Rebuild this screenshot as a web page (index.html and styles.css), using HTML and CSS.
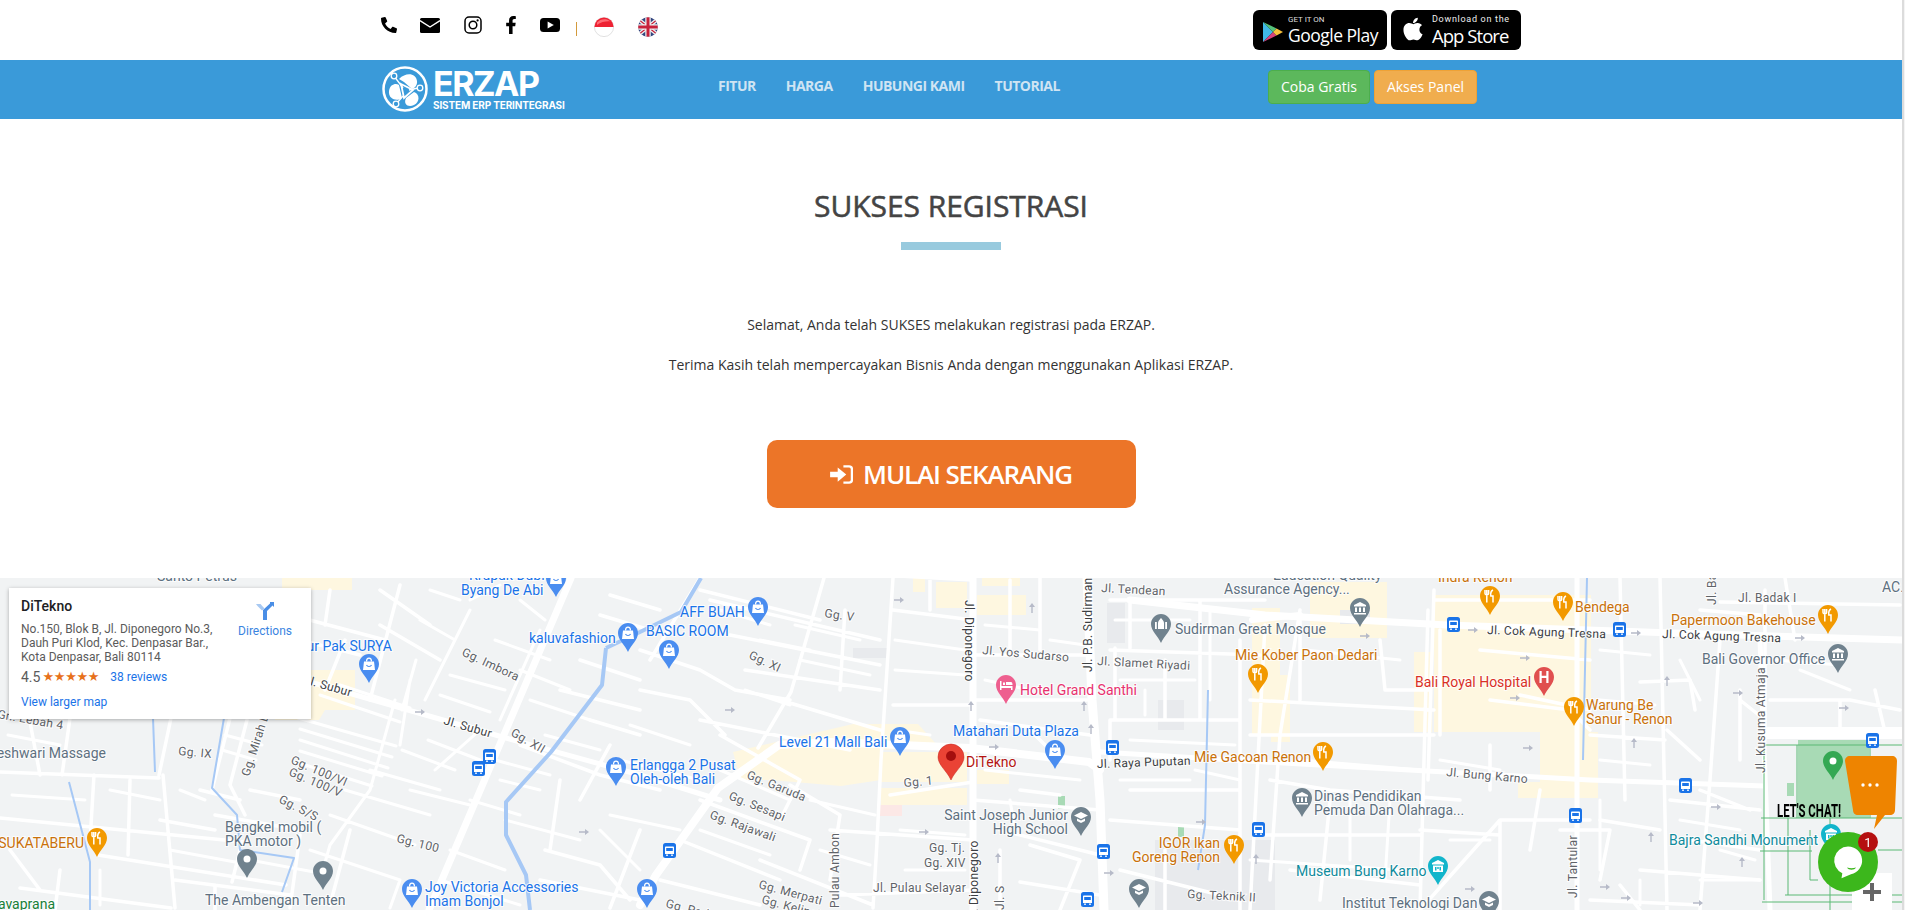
FILE: index.html
```html
<!DOCTYPE html>
<html lang="id">
<head>
<meta charset="utf-8">
<title>Sukses Registrasi - ERZAP</title>
<link rel="stylesheet" href="styles.css">
</head>
<body>
<div class="page">
  <header class="topbar">
    <div class="container topbar-row">
      <div class="social">
        <a class="ico ico-phone"><svg viewBox="0 0 512 512"><path transform="matrix(-1 0 0 1 512 0)" d="M493.4 24.6l-104-24c-11.3-2.6-22.9 3.3-27.5 13.9l-48 112c-4.2 9.8-1.4 21.3 6.9 28l60.6 49.6c-36 76.7-98.9 140.5-177.2 177.2l-49.6-60.6c-6.8-8.3-18.2-11.1-28-6.9l-112 48C3.9 366.5-2 378.1.6 389.4l24 104C27.1 504.2 36.7 512 48 512c256.1 0 464-207.5 464-464 0-11.2-7.7-20.9-18.6-23.4z"/></svg></a>
        <a class="ico ico-mail"><svg viewBox="0 0 20 15"><rect width="20" height="15" rx="1.5"/><path class="ln-white" d="M0 2.6L10 9l10-6.4"/></svg></a>
        <a class="ico ico-insta"><svg viewBox="0 0 18 18"><rect class="ln-black" x="1" y="1" width="16" height="16" rx="4"/><circle class="ln-black" cx="9" cy="9" r="3.8"/><circle cx="13.6" cy="4.4" r="1.1"/></svg></a>
        <a class="ico ico-fb"><svg viewBox="0 0 320 512"><path d="M279.14 288l14.22-92.66h-88.91v-60.13c0-25.35 12.42-50.06 52.24-50.06h40.42V6.26S260.43 0 225.36 0c-73.22 0-121.08 44.38-121.08 124.72v70.62H22.89V288h81.39v224h100.17V288z"/></svg></a>
        <a class="ico ico-yt"><svg viewBox="0 0 20 14"><rect width="20" height="14" rx="3.5"/><path class="fill-white" d="M7.6 3.6l6.2 3.4-6.2 3.4z"/></svg></a>
        <span class="sep"></span>
        <a class="flag"><svg viewBox="0 0 20 20"><circle cx="10" cy="10" r="9.6" class="flag-white"/><path class="flag-red" d="M.4 10a9.6 9.6 0 0 1 19.2 0z"/><path class="flag-shine" d="M3 5.6C6 2 12 1 16.600 4.400 12 4 7 5 3 8z"/></svg></a>
        <a class="flag"><svg viewBox="0 0 20 20"><defs><clipPath id="ukc"><circle cx="10" cy="10" r="9.800"/></clipPath></defs><g clip-path="url(#ukc)"><rect width="20" height="20" class="uk-blue"/><path class="uk-w4" d="M0 2L20 18M20 2L0 18"/><path class="uk-r1" d="M0 2L20 18M20 2L0 18"/><path class="uk-w6" d="M10 0V20M0 10H20"/><path class="uk-r3" d="M10 0V20M0 10H20"/></g></svg></a>
      </div>
      <div class="stores">
        <a class="store store-play">
          <svg class="play-ico" viewBox="0 0 20 20"><path class="pl-a" d="M0 0v20l10-10z"/><path class="pl-b" d="M0 0l10 10 3.500-3.500z"/><path class="pl-c" d="M0 20l10-10 3.500 3.500z"/><path class="pl-d" d="M13.500 6.500L10 10l3.500 3.500L20 10z"/></svg>
          <span class="store-txt"><small>GET IT ON</small><b>Google Play</b></span>
        </a>
        <a class="store store-apple">
          <svg class="apple-ico" viewBox="0 0 384 512"><path d="M318.700 268.700c-.2-36.700 16.400-64.400 50-84.800-18.800-26.900-47.200-41.700-84.700-44.600-35.500-2.800-74.300 20.700-88.500 20.700-15 0-49.400-19.700-76.400-19.700C63.300 141.200 4 184.800 4 273.500q0 39.300 14.400 81.200c12.800 36.700 59 126.700 107.200 125.200 25.200-.6 43-17.900 75.800-17.900 31.800 0 48.300 17.900 76.400 17.900 48.600-.7 90.400-82.500 102.600-119.300-65.200-30.700-61.700-90-61.700-91.900zm-56.600-164.200c27.300-32.400 24.800-61.900 24-72.500-24.100 1.400-52 16.400-67.900 34.900-17.500 19.800-27.800 44.300-25.600 71.900 26.100 2 49.900-11.400 69.500-34.300z"/></svg>
          <span class="store-txt"><small class="small-dl">Download on the</small><b class="b-app">App Store</b></span>
        </a>
      </div>
    </div>
  </header>

  <nav class="navbar">
    <div class="container nav-row">
      <a class="brand">
        <svg class="brand-mark" viewBox="0 0 46 46">
          <circle class="ring" cx="23" cy="23" r="21.500"/>
          <path class="fill-white" d="M17 13C24 6 34 7 35 15c.5 4-2 7-5 8l-8-7z"/>
          <path class="fill-white" d="M7 25c1-7 7-8 10-6l3 13c-5 4-14 1-13-7z"/>
          <path class="fill-white" d="M24 32l8-6c6 2 6 10 0 13-6 3-11-1-8-7z"/>
          <path class="brand-tri" d="M19 18l12 6-9 8z"/>
          <path class="brand-lines" d="M21 22L12 10M27 24l9-2M21 30l-6 7"/>
          <circle class="brand-node" cx="12" cy="10" r="2.800"/>
          <circle class="brand-node" cx="38" cy="22" r="2.800"/>
          <circle class="brand-node" cx="14" cy="38" r="2.800"/>
        </svg>
        <span class="brand-txt"><b>ERZAP</b><small>SISTEM ERP TERINTEGRASI</small></span>
      </a>
      <ul class="menu">
        <li>FITUR</li>
        <li>HARGA</li>
        <li>HUBUNGI KAMI</li>
        <li>TUTORIAL</li>
      </ul>
      <div class="nav-btns">
        <a class="btn btn-green">Coba Gratis</a>
        <a class="btn btn-amber">Akses Panel</a>
      </div>
    </div>
  </nav>

  <main class="content">
    <h1 class="title">SUKSES REGISTRASI</h1>
    <div class="title-bar"></div>
    <p class="lead">Selamat, Anda telah SUKSES melakukan registrasi pada ERZAP.</p>
    <p class="lead lead-2">Terima Kasih telah mempercayakan Bisnis Anda dengan menggunakan Aplikasi ERZAP.</p>
    <a class="cta">
      <svg class="cta-ico" viewBox="0 0 24 20"><path d="M0 7h8V2.500L17 10l-9 7.500V13H0z"/><path class="cta-door" d="M14 1.500h6c1.700 0 3 1.300 3 3v11c0 1.700-1.300 3-3 3h-6"/></svg>
      <span>MULAI SEKARANG</span>
    </a>
  </main>

  <section class="map">
    <svg class="map-svg" viewBox="0 578 1902 332" xmlns="http://www.w3.org/2000/svg">
      <defs>
        <path id="tear" d="M10 0C4.500 0 0 4.500 0 10c0 7 7 12 10 19 3-7 10-12 10-19C20 4.500 15.500 0 10 0z"/>
        <symbol id="p-bag" viewBox="0 0 20 29" width="20" height="29"><use href="#tear" class="c-blue"/><path class="fill-white" d="M5 7.500h10l1 8.500H4z"/><path class="bag-h" d="M7.500 7.500C7.500 3 12.500 3 12.500 7.500"/><path class="bag-s" d="M7.500 11c1 2 4 2 5 0"/></symbol>
        <symbol id="p-food" viewBox="0 0 20 29" width="20" height="29"><use href="#tear" class="c-orange"/><path class="food" d="M6.800 4v5M5 4v3.500c0 1.700 3.600 1.700 3.600 0V4M6.800 9v7.500M13 4c-2 1-2.500 4-2.200 6H13v6.500"/></symbol>
        <symbol id="p-dot" viewBox="0 0 20 29" width="20" height="29"><use href="#tear" class="c-gray"/><circle class="fill-white" cx="10" cy="10" r="3.500"/></symbol>
        <symbol id="p-bank" viewBox="0 0 20 29" width="20" height="29"><use href="#tear" class="c-gray"/><path class="fill-white" d="M10 4l6 3v1.500H4V7zM5 9.500h2V14H5zM9 9.500h2V14H9zM13 9.500h2V14h-2zM4 15h12v1.500H4z"/></symbol>
        <symbol id="p-school" viewBox="0 0 20 29" width="20" height="29"><use href="#tear" class="c-gray"/><path class="fill-white" d="M10 5l7 3.500-7 3.500-7-3.500zM6 11.500l4 2 4-2V14l-4 2-4-2z"/></symbol>
        <symbol id="p-mosque" viewBox="0 0 20 29" width="20" height="29"><use href="#tear" class="c-gray"/><path class="fill-white" d="M10 4c1 1.500 3 2.500 3 5v6H7V9c0-2.500 2-3.500 3-5zM4 8h1.800v7H4zM14.200 8H16v7h-1.800z"/></symbol>
        <symbol id="p-hotel" viewBox="0 0 20 29" width="20" height="29"><use href="#tear" class="c-pink"/><path class="fill-white" d="M4 6h1.500v5h11v4H15v-2H5.500v2H4zM7 7.500h2v2.500H7zM10 7h5c1 0 1.500 1 1.500 3H10z"/></symbol>
        <symbol id="p-teal" viewBox="0 0 20 29" width="20" height="29"><use href="#tear" class="c-teal"/><path class="fill-white" d="M10 4l6 3v1.500H4V7zM5 9.500h10V16H5z"/><path class="c-teal" d="M7 11h1.500v3.500H7zM11.500 11H13v3.500h-1.500zM9.300 11h1.400v2H9.300z"/></symbol>
        <symbol id="p-green" viewBox="0 0 20 29" width="20" height="29"><use href="#tear" class="c-green"/><circle class="fill-white" cx="10" cy="10" r="3.500"/></symbol>
        <symbol id="p-h" viewBox="0 0 20 29" width="20" height="29"><use href="#tear" class="c-red"/><path class="fill-white" d="M5.500 4h2.200v4.800h4.600V4h2.200v12h-2.200v-5h-4.600v5H5.500z"/></symbol>
        <symbol id="bus" viewBox="0 0 13 15" width="13" height="15"><rect width="13" height="15" rx="2.500" class="c-bus"/><path class="fill-white" d="M3 3.500h7c.5 0 1 .4 1 1V11H2V4.500c0-.6.500-1 1-1zM3.200 11.500h1.600V13H3.200zM8.200 11.500h1.600V13H8.200z"/><path class="c-bus" d="M3.200 5h6.600v3H3.200z"/></symbol>
        <symbol id="ah" viewBox="0 0 10 6" width="10" height="6"><path class="c-arrow" d="M0 2.300h6V0l4 3-4 3V3.700H0z"/></symbol>
        <symbol id="av" viewBox="0 0 6 10" width="6" height="10"><path class="c-arrow" d="M2.300 10V4H0l3-4 3 4H3.700v6z"/></symbol>
      </defs>

      <rect x="0" y="578" width="1902" height="332" class="m-bg"/>

      <g class="m-yellow">
        <path d="M275 670h80v40h-30l-6 10h-44zM282 578h70v12h-70z"/>
        <path d="M733 752l120-28h65l20 22-57 4v30l-40 6-70-6-30 0z"/>
        <path d="M881 752h86v30h-86zM881 788h86v17h-86zM977 770h32v14h-32z"/>
        <path d="M936 582h31v26h-31zM977 595h49v20h-49zM913 578h12v14h-12zM982 578h38v8h-38z"/>
        <path d="M1252 608h28v127h-28z"/>
        <path d="M1310 582h77v56h-77zM1271 675h19v67h-19zM1414 652h18v80h-18z"/>
        <path d="M1434 595h157v137h-157zM1518 782h80v16h-80zM1540 732h58v50h-58z"/>
      </g>
      <rect x="878" y="805" width="24" height="11" class="m-pink"/>
      <rect x="1058" y="796" width="7" height="13" class="m-park"/>
      <rect x="1178" y="825" width="6" height="12" class="m-park"/>
      <rect x="1158" y="700" width="26" height="30" class="m-block"/>
      <rect x="1340" y="610" width="30" height="14" class="m-block"/>
      <rect x="1107" y="603" width="18" height="40" class="m-block"/>
      <rect x="1155" y="840" width="120" height="70" class="m-dark"/>
      <rect x="853" y="648" width="34" height="10" class="m-block"/>

      <path class="r3" d="M0 772L159 778M0 818L245 842M98 855L286 885M20 888L171 908M163 775L175 908M171 718L159 775M94 775L90 842M30 722L40 775M70 718L62 775M10 850L40 890M55 910L60 870M230 718L212 790M247 720L230 785L245 815M250 790L300 800M215 815L300 830M200 790L240 800M130 780L128 855M240 850L232 882M300 835L290 908M350 830L330 905M160 820L215 830M175 880L290 895M215 885L215 910"/>
      <path class="r2" d="M298 718L396 746M300 729L392 757M300 740L388 768M300 751L382 776M296 762L372 786M320 695L400 722M340 685L410 708M395 700L370 790L330 845L320 880M410 680L400 745M370 770L440 790M345 790L430 815M330 815L415 845M310 850L400 880M400 880L390 908M416 660L402 710M430 590L460 600M420 620L455 640L470 610M455 640L425 700M450 675L505 690M470 600L500 585M520 600L545 620M495 640L550 660M520 670L570 690M540 630L500 720M435 770L480 730M428 740L480 760M500 780L540 790M505 820L580 840M450 850L505 870M470 800L520 815M440 880L520 905"/>
      <path class="r2" d="M225 735L262 745M222 750L256 760M8 735L60 745M110 790L160 800M12 795L85 800M180 790L205 800M170 850L235 862M100 870L100 905M250 860L330 875M410 790L470 805M402 750L455 770M440 695L490 712M495 760L550 775M530 700L590 720M545 735L600 750M630 725L690 745M620 760L700 780M610 815L680 830M600 830L640 870M720 610L770 625M760 640L810 650M745 690L790 705M795 625L860 640M800 660L870 675M720 770L790 800M700 830L770 855M810 800L875 815M820 850L870 865M895 640L965 650M895 670L965 675M895 730L930 735M900 830L965 835M905 870L965 870M985 625L1040 630M985 680L1030 690M985 770L1080 780M1010 800L1015 830M1050 640L1085 645M1115 620H1190M1120 680H1195M1130 740L1235 745M1120 780H1190M1145 690V715M1210 610L1210 700M1195 770L1240 780M1250 860L1400 870M1305 650L1400 660M1300 760L1420 770M1350 800V860M1390 800L1385 880M1440 760L1500 770M1450 840H1490M1600 650L1650 655M1600 700L1655 705M1600 760L1650 765M1600 800V870M1680 660L1700 700M1680 820L1740 830M1720 850L1755 860M1640 880L1640 905M1700 880H1760M1775 660L1840 665M1800 670L1850 690"/>
      <path class="r3" d="M302 618L385 640M300 640L360 655M330 590L325 625M400 585L370 700M345 640L325 690M380 590L430 625M380 625L440 660M560 690L640 710M580 660L640 680M600 615L650 630M610 595L660 610M520 745L600 775L660 790M560 780L550 850M545 850L600 865M600 865L630 900M640 830L610 908M540 880L640 900M590 720L640 735M610 745L580 800"/>
      <path class="r3" d="M824 578L791 692L758 748M893 578L881 760L877 842L873 908M640 650L700 670L735 690L790 700M640 690L690 700L725 735M700 590L820 620M710 600L880 640M730 635L880 665M745 670L880 690M780 700L880 730M700 720L850 750M720 735L800 780L780 820M700 800L810 840L800 870M680 840L780 880M660 880L760 905M790 785L840 815L830 880M830 830L973 840M840 895L973 890M700 578L650 660M880 575L973 580M893 610L973 620M893 705L973 705M890 795L973 782M760 860L873 905M845 610L840 690M930 580V610M1040 578V650M1010 580V650M973 655H1087M973 700H1087M980 720L1090 735M973 800L1100 810M1000 830L1100 855M1000 850L1000 910M1030 845L1080 860L1060 910M1020 790L1060 795M1030 730L1060 760M1020 882L1100 895"/>
      <path class="r3" d="M1110 600H1265M1110 650L1260 655M1110 720H1240M1115 648V720M1200 600V720M1130 600V648M1165 660V720M1240 640V910M1110 820L1240 830M1130 790H1240V815M1110 760V720M1120 870L1240 900M1165 850V910M1265 625L1250 910M1250 700L1434 710M1300 610L1280 735L1270 880M1250 735L1434 735M1300 620V700M1380 640L1385 690H1430M1434 590L1428 780M1428 610L1420 910M1260 835H1420M1270 780L1330 790L1460 800M1330 800L1320 900M1290 870L1420 885M1420 830L1500 835M1420 910L1500 820H1590M1440 630V735M1490 700L1570 710L1590 730M1490 745V790M1540 790L1530 850M1500 820L1500 910M1577 578V910M1435 600L1590 600M1480 650L1590 660M1520 695L1590 710M1620 578L1625 800M1660 578L1667 910M1590 735L1665 740M1600 820L1660 830M1560 830H1610L1600 880M1590 900L1700 905M1620 885L1640 910M1640 682L1690 680L1695 710M1667 730L1700 760M1700 790L1750 810M1720 640L1710 780L1700 910M1720 602L1900 605M1740 690V760M1740 700L1765 720M1770 700L1850 700L1900 710M1785 578L1795 640M1840 700V732M1875 690L1885 732M1670 800L1760 810M1640 870L1760 880M1690 840L1760 850"/>
      <path class="r3" d="M1700 610L1760 615M1765 590L1765 740"/>

      <path class="r-w" d="M1252 620L1300 615"/>
      <path class="r7" d="M571 578L429 910"/>
      <path class="r5" d="M262 670L310 682L506 738L640 775L720 800"/>
      <path class="r8" d="M640 905L656 875L718 788L779 745L830 742L970 748L1089 762L1100 770"/>
      <path class="r5" d="M1100 752L1265 762L1590 780L1765 786"/>
      <path class="r9" d="M1087 578L1092 700L1100 800L1104 910"/>
      <path class="r7" d="M973 578V910"/>
      <path class="r7" d="M1130 600L1265 615L1447 625L1673 633L1905 640"/>
      <path class="r5" d="M1577 578V910"/>
      <path class="r5" d="M1760 640L1770 910"/>
      <path class="r12" d="M1765 733H1905"/>

      <path class="w5" d="M606 648L602 685L551 752L506 802L506 835L526 875L530 910M606 648L640 632L681 612L701 578"/>
      <path class="w2" d="M224 718L212 788L237 815L240 850L294 858L282 892M69 782L90 862L90 910M153 718L155 772M1587 578L1583 760M1208 690L1205 825L1198 870"/>

      <rect x="1798" y="740" width="71" height="78" class="m-parkb"/>
      <rect x="1787" y="783" width="7" height="13" class="m-parkb"/>
      <path class="g1" d="M1764 745V900M1764 745H1902M1761 818H1902M1797 745V818M1788 818V895M1760 851H1812M1785 895H1902M1762 902H1902M1870 745V818M1810 830V880H1818M1830 818V910M1878 850H1902"/>

      <g class="l14">
        <text x="157" y="581" class="t-gray">Santo Petrus</text>
        <text x="469" y="580" class="t-blue">Krupuk Dubi</text>
        <text x="461" y="595" class="t-blue">Byang De Abi</text>
        <text x="392" y="651" class="t-blue t-end">Sayur Pak SURYA</text>
        <text x="529" y="643" class="t-blue">kaluvafashion</text>
        <text x="630" y="770" class="t-blue">Erlangga 2 Pusat</text>
        <text x="630" y="784" class="t-blue">Oleh-oleh Bali</text>
        <text x="425" y="892" class="t-blue">Joy Victoria Accessories</text>
        <text x="425" y="906" class="t-blue">Imam Bonjol</text>
        <text x="680" y="617" class="t-blue">AFF BUAH</text>
        <text x="646" y="636" class="t-blue">BASIC ROOM</text>
        <text x="779" y="747" class="t-blue">Level 21 Mall Bali</text>
        <text x="953" y="736" class="t-blue">Matahari Duta Plaza</text>
        <text x="106" y="758" class="t-gray t-end">Rameshwari Massage</text>
        <text x="225" y="832" class="t-gray">Bengkel mobil (</text>
        <text x="225" y="846" class="t-gray">PKA motor )</text>
        <text x="205" y="905" class="t-gray">The Ambengan Tenten</text>
        <text x="84" y="848" class="t-orange t-end">SUKATABERU</text>
        <text x="55" y="909" class="t-green t-end">Navaprana</text>
        <text x="1020" y="695" class="t-pink">Hotel Grand Santhi</text>
        <text x="966" y="767" class="t-dred">DiTekno</text>
        <text x="1068" y="820" class="t-gray t-end">Saint Joseph Junior</text>
        <text x="1068" y="834" class="t-gray t-end">High School</text>
        <text x="1175" y="634" class="t-gray">Sudirman Great Mosque</text>
        <text x="1235" y="660" class="t-orange">Mie Kober Paon Dedari</text>
        <text x="1194" y="762" class="t-orange">Mie Gacoan Renon</text>
        <text x="1220" y="848" class="t-orange t-end">IGOR Ikan</text>
        <text x="1220" y="862" class="t-orange t-end">Goreng Renon</text>
        <text x="1273" y="580" class="t-gray">Education Quality</text>
        <text x="1224" y="594" class="t-gray">Assurance Agency...</text>
        <text x="1438" y="582" class="t-orange">Indra Renon</text>
        <text x="1575" y="612" class="t-orange">Bendega</text>
        <text x="1671" y="625" class="t-orange">Papermoon Bakehouse</text>
        <text x="1702" y="664" class="t-gray">Bali Governor Office</text>
        <text x="1415" y="687" class="t-red">Bali Royal Hospital</text>
        <text x="1586" y="710" class="t-orange">Warung Be</text>
        <text x="1586" y="724" class="t-orange">Sanur - Renon</text>
        <text x="1314" y="801" class="t-gray">Dinas Pendidikan</text>
        <text x="1314" y="815" class="t-gray">Pemuda Dan Olahraga...</text>
        <text x="1296" y="876" class="t-teal">Museum Bung Karno</text>
        <text x="1342" y="908" class="t-gray">Institut Teknologi Dan</text>
        <text x="1669" y="845" class="t-teal">Bajra Sandhi Monument</text>
        <text x="1882" y="592" class="t-gray">AC.</text>
      </g>
      <g class="l12">
        <text x="461" y="655" transform="rotate(25 461 655)">Gg. Imbora</text>
        <text x="303" y="683" transform="rotate(16 303 683)" class="t-dark">Jl. Subur</text>
        <text x="443" y="724" transform="rotate(16 443 724)" class="t-dark">Jl. Subur</text>
        <text x="510" y="735" transform="rotate(30 510 735)">Gg. XII</text>
        <text x="178" y="755" transform="rotate(5 178 755)">Gg. IX</text>
        <text x="249" y="777" transform="rotate(-72 249 777)">Gg. Mirah D</text>
        <text x="290" y="763" transform="rotate(23 290 763)">Gg. 100/VI</text>
        <text x="288" y="775" transform="rotate(23 288 775)">Gg. 100/V</text>
        <text x="278" y="802" transform="rotate(27 278 802)">Gg. S/S</text>
        <text x="396" y="842" transform="rotate(14 396 842)">Gg. 100</text>
        <text x="-3" y="718" transform="rotate(10 -3 718)">Gn. Lebah 4</text>
        <text x="824" y="617" transform="rotate(8 824 617)">Gg. V</text>
        <text x="748" y="658" transform="rotate(25 748 658)">Gg. XI</text>
        <text x="965" y="600" transform="rotate(90 965 600)" class="t-dark">Jl. Diponegoro</text>
        <text x="1092" y="672" transform="rotate(-90 1092 672)" class="t-dark">Jl. P.B. Sudirman</text>
        <text x="1101" y="592" transform="rotate(3 1101 592)">Jl. Tendean</text>
        <text x="982" y="654" transform="rotate(5 982 654)">Jl. Yos Sudarso</text>
        <text x="1097" y="665" transform="rotate(3 1097 665)">Jl. Slamet Riyadi</text>
        <text x="1097" y="768" transform="rotate(-2 1097 768)" class="t-dark">Jl. Raya Puputan</text>
        <text x="904" y="787" transform="rotate(-5 904 787)">Gg. 1</text>
        <text x="746" y="778" transform="rotate(22 746 778)">Gg. Garuda</text>
        <text x="728" y="799" transform="rotate(22 728 799)">Gg. Sesapi</text>
        <text x="709" y="818" transform="rotate(20 709 818)">Gg. Rajawali</text>
        <text x="929" y="852">Gg. Tj.</text>
        <text x="924" y="867">Gg. XIV</text>
        <text x="839" y="908" transform="rotate(-90 839 908)">Pulau Ambon</text>
        <text x="873" y="892">Jl. Pulau Selayar</text>
        <text x="758" y="888" transform="rotate(15 758 888)">Gg. Merpati</text>
        <text x="761" y="903" transform="rotate(15 761 903)">Gg. Kelinci</text>
        <text x="665" y="907" transform="rotate(15 665 907)">Gg. Padma</text>
        <text x="978" y="922" transform="rotate(-90 978 922)" class="t-dark">Jl. Diponegoro</text>
        <text x="1004" y="910" transform="rotate(-90 1004 910)">Jl. S</text>
        <text x="1187" y="898" transform="rotate(3 1187 898)">Gg. Teknik II</text>
        <text x="1487" y="634" transform="rotate(2 1487 634)" class="t-dark">Jl. Cok Agung Tresna</text>
        <text x="1662" y="638" transform="rotate(2 1662 638)" class="t-dark">Jl. Cok Agung Tresna</text>
        <text x="1446" y="776" transform="rotate(5 1446 776)">Jl. Bung Karno</text>
        <text x="1738" y="602">Jl. Badak I</text>
        <text x="1716" y="605" transform="rotate(-90 1716 605)">Jl. Badak</text>
        <text x="1765" y="773" transform="rotate(-90 1765 773)">Jl. Kusuma Atmaja</text>
        <text x="1577" y="898" transform="rotate(-90 1577 898)">Jl. Tantular</text>
      </g>

      <use href="#p-bag" x="546" y="568"/><use href="#p-bag" x="359" y="654"/><use href="#p-bag" x="618" y="623"/><use href="#p-bag" x="606" y="757"/>
      <use href="#p-bag" x="402" y="879"/><use href="#p-bag" x="748" y="597"/><use href="#p-bag" x="659" y="640"/><use href="#p-bag" x="890" y="727"/><use href="#p-bag" x="1045" y="740"/><use href="#p-bag" x="637" y="879"/>
      <use href="#p-food" x="87" y="828"/><use href="#p-food" x="1248" y="664"/><use href="#p-food" x="1224" y="835"/><use href="#p-food" x="1480" y="586"/><use href="#p-food" x="1553" y="592"/><use href="#p-food" x="1818" y="605"/><use href="#p-food" x="1564" y="697"/><use href="#p-food" x="1313" y="742"/>
      <use href="#p-dot" x="237" y="849"/><use href="#p-dot" x="313" y="861"/>
      <use href="#p-hotel" x="996" y="675"/>
      <use href="#p-mosque" x="1151" y="614"/>
      <use href="#p-school" x="1071" y="807"/><use href="#p-school" x="1129" y="879"/><use href="#p-school" x="1479" y="891"/>
      <use href="#p-bank" x="1350" y="598"/><use href="#p-bank" x="1828" y="644"/><use href="#p-bank" x="1292" y="788"/>
      <use href="#p-h" x="1534" y="667"/>
      <use href="#p-teal" x="1428" y="856"/><use href="#p-teal" x="1821" y="824"/>
      <use href="#p-green" x="1823" y="751"/>

      <use href="#bus" x="483" y="749"/><use href="#bus" x="472" y="761"/><use href="#bus" x="663" y="843"/><use href="#bus" x="1106" y="740"/><use href="#bus" x="1097" y="844"/><use href="#bus" x="1081" y="892"/><use href="#bus" x="1252" y="822"/><use href="#bus" x="1447" y="617"/><use href="#bus" x="1613" y="622"/><use href="#bus" x="1679" y="778"/><use href="#bus" x="1569" y="808"/><use href="#bus" x="1866" y="733"/>

      <use href="#ah" x="415" y="709"/><use href="#ah" x="579" y="829"/><use href="#ah" x="894" y="597"/><use href="#ah" x="725" y="707"/><use href="#ah" x="989" y="744"/><use href="#ah" x="919" y="829"/><use href="#ah" x="1104" y="870"/><use href="#ah" x="1196" y="819"/><use href="#ah" x="1468" y="627"/><use href="#ah" x="1631" y="630"/><use href="#ah" x="1795" y="635"/><use href="#ah" x="1360" y="633"/><use href="#ah" x="1520" y="655"/><use href="#ah" x="1510" y="695"/><use href="#ah" x="1733" y="690"/><use href="#ah" x="1839" y="705"/><use href="#ah" x="1523" y="745"/><use href="#ah" x="1711" y="804"/><use href="#ah" x="1600" y="884"/><use href="#ah" x="1621" y="895"/><use href="#ah" x="1465" y="886"/><use href="#ah" x="1693" y="900"/>
      <use href="#av" x="1029" y="603"/><use href="#av" x="968" y="701"/><use href="#av" x="1081" y="701"/><use href="#av" x="1088" y="724"/><use href="#av" x="995" y="853"/><use href="#av" x="1253" y="854"/><use href="#av" x="1664" y="676"/><use href="#av" x="1631" y="738"/><use href="#av" x="1648" y="832"/><use href="#av" x="1739" y="857"/>

      <path class="c-main" d="M951 780c-4-9-13-15-13-23a13 13 0 0 1 26 0c0 8-9 14-13 23z"/>
      <circle class="c-main-dot" cx="951" cy="756" r="5"/>
    </svg>

    <aside class="card">
      <div class="card-main">
        <div class="card-name">DiTekno</div>
        <address class="card-addr">No.150, Blok B, Jl. Diponegoro No.3,<br>Dauh Puri Klod, Kec. Denpasar Bar.,<br>Kota Denpasar, Bali 80114</address>
        <div class="card-rate"><span class="rate-num">4.5</span><span class="rate-stars">★★★★★</span><a class="card-link rate-link">38 reviews</a></div>
        <a class="card-link card-larger">View larger map</a>
      </div>
      <a class="card-dir">
        <svg class="dir-ico" viewBox="0 0 18 18"><path class="dir-b" d="M14 0h4v5l-1.500-1.500L11 9v9H7V8l7-6.500z"/><path class="dir-l" d="M0 2h4.500l4 4.500-2.500 2L1.500 4z"/></svg>
        <span>Directions</span>
      </a>
    </aside>

    <div class="zoomctl"><svg viewBox="0 0 18 18"><path d="M7 0h4v7h7v4h-7v7H7v-7H0V7h7z"/></svg></div>
  </section>
</div>
<div class="edge"></div>

<svg class="chat" viewBox="1770 750 132 142" xmlns="http://www.w3.org/2000/svg">
  <path class="chat-o" d="M1850 756h42c3 0 5 2 5 5l-2 49c0 3-2 5-5 5h-5l-11 14 3-14h-19c-3 0-5-2-5-5l-8-49c0-3 2-5 5-5z"/>
  <circle class="fill-white" cx="1863" cy="785" r="1.700"/><circle class="fill-white" cx="1870" cy="785" r="1.700"/><circle class="fill-white" cx="1877" cy="785" r="1.700"/>
  <text class="chat-txt" x="1777" y="817" textLength="64" lengthAdjust="spacingAndGlyphs">LET'S CHAT!</text>
  <circle class="chat-g" cx="1848" cy="862" r="30"/>
  <path class="fill-white" d="M1848 846.500a14 14 0 0 1 3 27.700l-9.500 4 .8-5a14 14 0 0 1 5.700-26.700z"/>
  <path class="chat-s" d="M1847 867.500c1.500 3 7.500 3 9 0-3 1-6 1-9 0z"/>
  <circle class="chat-r" cx="1868" cy="842" r="10"/>
  <text class="chat-n" x="1868" y="847">1</text>
</svg>
</body>
</html>
```

FILE: styles.css
```css
* { box-sizing: border-box; }
html, body { margin: 0; padding: 0; height: 910px; overflow: hidden; background: #fff; }
body { display: flex; font-family: "Open Sans", "Liberation Sans", sans-serif; color: #333; font-size: 14px; }
.page { width: 1902px; flex: none; }
.edge { width: 3px; flex: none; background: linear-gradient(to right, #dcdcdc 0 2px, #f4f4f4 2px); }
a { text-decoration: none; color: inherit; }
.container { width: 1170px; margin: 0 auto; padding: 0 15px; }

/* top bar */
.topbar { height: 60px; background: #fff; }
.topbar-row { display: flex; justify-content: space-between; align-items: flex-start; padding-top: 10px; }
.social { display: flex; align-items: center; height: 30px; }
.ico { display: block; fill: #000; }
.ico svg, .flag svg { display: block; width: 100%; height: 100%; }
.ico-phone { width: 16px; height: 16px; margin-right: 23px; }
.ico-mail { width: 20px; height: 15px; margin-right: 24px; }
.ico-insta { width: 18px; height: 18px; margin-right: 23px; }
.ico-fb { width: 12px; height: 18px; margin-right: 23px; }
.ico-yt { width: 20px; height: 14px; margin-right: 16px; }
.sep { width: 1px; height: 14px; background: #d39a3c; margin: 8px 17px 0 0; }
.flag { display: block; width: 20px; height: 20px; margin: 4px 24px 0 0; }
.ln-white { fill: none; stroke: #fff; stroke-width: 1.400; }
.ln-black { fill: none; stroke: #000; stroke-width: 1.500; }
.fill-white { fill: #fff; }
.flag-white { fill: #fff; stroke: #ccc; stroke-width: .6; }
.flag-red { fill: #ee2233; }
.flag-shine { fill: #ff6b75; }
.uk-blue { fill: #33457f; }
.uk-w4 { stroke: #eee; stroke-width: 4; }
.uk-r1 { stroke: #c8203a; stroke-width: 1.300; }
.uk-w6 { stroke: #eee; stroke-width: 5.500; }
.uk-r3 { stroke: #c8203a; stroke-width: 3; }

.stores { display: flex; gap: 4px; margin-right: 0; }
.store { display: flex; align-items: center; height: 40px; background: #000; border-radius: 6px; color: #fff; }
.store-play { width: 134px; padding-left: 10px; gap: 5px; }
.store-apple { width: 130px; padding-left: 12px; gap: 9px; }
.play-ico { width: 20px; height: 20px; margin-top: 3px; flex: none; }
.pl-a { fill: #3fb9e8; } .pl-b { fill: #55c27a; } .pl-c { fill: #d8417d; } .pl-d { fill: #f7c13c; }
.apple-ico { width: 20px; height: 26px; fill: #fff; flex: none; margin-top: -2px; }
.store-txt { display: flex; flex-direction: column; }
.store-txt small { font-family: Roboto, sans-serif; font-size: 8px; line-height: 9px; color: #ddd; }
.store-txt b { font-family: "Open Sans", sans-serif; font-weight: 400; font-size: 17.500px; line-height: 22px; letter-spacing: -.5px; }
.store-txt .small-dl { font-size: 9px; letter-spacing: .7px; line-height: 11px; color: #eee; }
.store-txt .b-app { font-size: 18.500px; line-height: 21px; letter-spacing: -.95px; }

/* nav */
.navbar { height: 59px; background: #3a9ad9; }
.nav-row { display: grid; grid-template-columns: 337px 550px 1fr; align-items: center; height: 59px; }
.brand { display: flex; align-items: center; gap: 4px; color: #fff; margin-left: 1px; margin-top: -1px; }
.brand-mark { width: 46px; height: 46px; flex: none; }
.ring { fill: none; stroke: #fff; stroke-width: 2.500; }
.brand-tri { fill: #3a9ad9; stroke: #fff; stroke-width: 1.800; }
.brand-lines { fill: none; stroke: #fff; stroke-width: 1.300; }
.brand-node { fill: #3a9ad9; stroke: #fff; stroke-width: 1.300; }
.brand-txt { display: flex; flex-direction: column; padding-left: 1px; }
.brand-txt b { font-family: Inter, sans-serif; font-weight: 700; font-size: 34px; line-height: 32px; letter-spacing: -1.5px; }
.brand-txt small { font-family: Inter, sans-serif; font-weight: 700; font-size: 10px; line-height: 11px; letter-spacing: -.15px; }
.menu { display: flex; gap: 30px; list-style: none; margin: -9px 0 0; padding: 0; font-weight: 700; font-size: 14px; letter-spacing: -.5px; color: #cfe4f3; white-space: nowrap; }
.nav-btns { display: flex; gap: 4px; margin-top: -5px; }
.btn { display: block; height: 34px; line-height: 32px; text-align: center; border-radius: 4px; color: #fff; font-size: 14px; border: 1px solid; white-space: nowrap; }
.btn-green { background: #5cb85c; border-color: #4cae4c; width: 102px; }
.btn-amber { background: #f0ad4e; border-color: #eea236; width: 103px; }

/* content */
.content { height: 459px; padding-top: 67px; text-align: center; }
.title { margin: 0; font-size: 30px; line-height: 40px; font-weight: 400; letter-spacing: -.05px; color: #444; -webkit-text-stroke: .55px #444; }
.title-bar { width: 100px; height: 8px; background: #98cade; margin: 16px auto 0; }
.lead { margin: 65px 0 0; line-height: 20px; font-size: 14px; color: #333; }
.lead-2 { margin-top: 20px; }
.cta { display: flex; align-items: center; justify-content: center; gap: 10px; width: 369px; height: 68px; margin: 65px auto 0; background: #ec7528; border-radius: 10px; color: #fff; font-size: 26px; font-weight: 600; letter-spacing: -1.15px; }
.cta-ico { width: 23px; height: 19px; fill: #fff; }
.cta-door { fill: none; stroke: #fff; stroke-width: 2.500; }

/* map */
.map { position: relative; height: 332px; overflow: hidden; }
.map-svg { display: block; width: 1902px; height: 332px; font-family: Roboto, sans-serif; }
.m-bg { fill: #f1f3f4; }
.m-yellow { fill: #fef7e0; }
.m-pink { fill: #fce8e6; }
.m-park { fill: #a8dab5; }
.m-parkb { fill: #a8dab5; }
.m-block { fill: #e8eaed; }
.m-dark { fill: #e8eaed; }
.r2, .r3, .r5, .r7, .r8, .r9, .r12, .r-w { fill: none; stroke: #fff; stroke-linecap: round; stroke-linejoin: round; }
.r2 { stroke-width: 3; }
.r3 { stroke-width: 3.500; }
.r5 { stroke-width: 5; }
.r7 { stroke-width: 7; }
.r8 { stroke-width: 8; }
.r9 { stroke-width: 9; }
.r12 { stroke-width: 12; }
.r-w { stroke-width: 6; }
.w5 { fill: none; stroke: #a6c8f5; stroke-width: 4; stroke-linejoin: round; }
.w2 { fill: none; stroke: #a6c8f5; stroke-width: 2; stroke-linejoin: round; }
.g1 { fill: none; stroke: #5bb974; stroke-width: 1; }
.l14 text { font-size: 14px; paint-order: stroke; stroke: #fff; stroke-width: 2px; stroke-opacity: .8; }
.l12 text { font-size: 12px; letter-spacing: .3px; fill: #5f6368; paint-order: stroke; stroke: #fff; stroke-width: 2px; stroke-opacity: .8; }
.l12 .t-dark { fill: #3c4043; }
.t-end { text-anchor: end; }
.t-blue { fill: #1a73e8; }
.t-gray { fill: #5e7080; }
.t-orange { fill: #c9710a; }
.t-green { fill: #188038; }
.t-pink { fill: #e8316f; }
.t-red { fill: #d93025; }
.t-dred { fill: #b31412; }
.t-teal { fill: #0f8b9c; }
.c-blue { fill: #4a8df0; }
.c-orange { fill: #f29900; }
.c-gray { fill: #70828e; }
.c-pink { fill: #ee5f8f; }
.c-red { fill: #e04f4f; }
.c-teal { fill: #12b5cb; }
.c-green { fill: #34a853; }
.c-bus { fill: #1a73e8; }
.c-arrow { fill: #b6bac8; }
.c-main { fill: #ea4335; stroke: #c5221f; stroke-width: .5; }
.c-main-dot { fill: #a50e0e; }
.bag-h { fill: none; stroke: #fff; stroke-width: 1.200; }
.bag-s { fill: none; stroke: #4a8df0; stroke-width: 1.200; }
.food { fill: none; stroke: #fff; stroke-width: 1.500; }

.card { position: absolute; left: 9px; top: 10px; width: 302px; height: 131px; background: #fff; box-shadow: 0 1px 4px rgba(0,0,0,.3); padding: 10px 12px 0; display: flex; justify-content: space-between; font-family: Roboto, sans-serif; font-size: 12px; color: #5b5b5b; }
.card-name { font-size: 14px; font-weight: 500; color: #202124; line-height: 16px; }
.card-addr { font-style: normal; line-height: 14px; margin-top: 8px; font-size: 12px; }
.card-rate { display: flex; align-items: center; margin-top: 4px; height: 17px; }
.rate-num { font-size: 14px; }
.rate-stars { color: #e7711b; font-size: 13px; margin-left: 2px; letter-spacing: -.3px; font-family: "DejaVu Sans", sans-serif; }
.rate-link { margin-left: 11px; }
.card-link { color: #1a73e8; }
.card-larger { display: block; margin-top: 10px; line-height: 14px; }
.card-dir { display: flex; flex-direction: column; align-items: center; gap: 4px; color: #3a84df; margin-top: 4px; margin-right: 7px; }
.dir-ico { width: 18px; height: 18px; }
.dir-b { fill: #4a8ee6; }
.dir-l { fill: #a8c9f2; }
.zoomctl { position: absolute; right: 10px; bottom: 0; width: 40px; height: 37px; background: #fff; display: flex; align-items: center; justify-content: center; fill: #666; }
.zoomctl svg { width: 18px; height: 18px; }

/* chat */
.chat { position: fixed; right: 3px; bottom: 18px; width: 132px; height: 142px; overflow: visible; }
.chat-o { fill: #ee8400; }
.chat-g { fill: #3cb71c; }
.chat-s { fill: #3cb71c; }
.chat-r { fill: #b51010; }
.chat-n { fill: #fff; font: 13px Roboto, sans-serif; text-anchor: middle; }
.chat-txt { fill: #000; font: 700 19px Roboto, sans-serif; }
```
